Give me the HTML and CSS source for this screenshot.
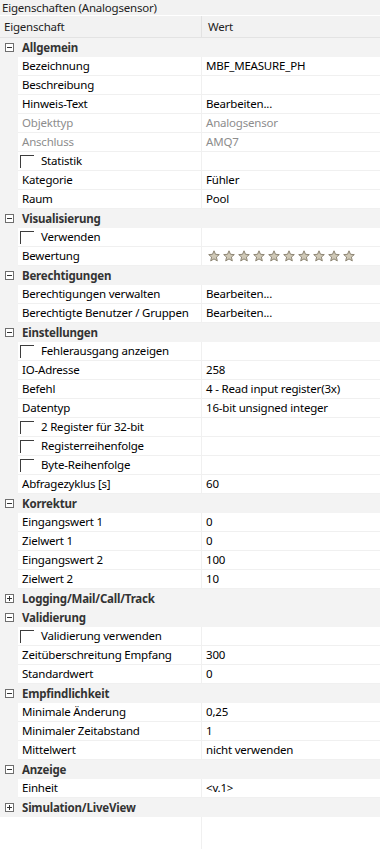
FILE: index.html
```html
<!DOCTYPE html>
<html lang="de">
<head>
<meta charset="utf-8">
<title>Eigenschaften</title>
<link rel="stylesheet" href="styles.css">
</head>
<body>
<div class="panel">
  <div class="title">Eigenschaften (Analogsensor)</div>
  <div class="header">
    <div class="h-name">Eigenschaft</div>
    <div class="h-value">Wert</div>
  </div>
  <div class="grid">
    <div class="cat"><span class="exp open"></span><span class="cat-label">Allgemein</span></div>
    <div class="row"><div class="gut"></div><div class="name">Bezeichnung</div><div class="value">MBF_MEASURE_PH</div></div>
    <div class="row"><div class="gut"></div><div class="name">Beschreibung</div><div class="value"></div></div>
    <div class="row"><div class="gut"></div><div class="name">Hinweis-Text</div><div class="value">Bearbeiten...</div></div>
    <div class="row dis"><div class="gut"></div><div class="name">Objekttyp</div><div class="value">Analogsensor</div></div>
    <div class="row dis"><div class="gut"></div><div class="name">Anschluss</div><div class="value">AMQ7</div></div>
    <div class="row"><div class="gut"></div><div class="name chk"><span class="box"></span>Statistik</div><div class="value"></div></div>
    <div class="row"><div class="gut"></div><div class="name">Kategorie</div><div class="value">Fühler</div></div>
    <div class="row"><div class="gut"></div><div class="name">Raum</div><div class="value">Pool</div></div>

    <div class="cat"><span class="exp open"></span><span class="cat-label">Visualisierung</span></div>
    <div class="row"><div class="gut"></div><div class="name chk"><span class="box"></span>Verwenden</div><div class="value"></div></div>
    <div class="row"><div class="gut"></div><div class="name">Bewertung</div><div class="value stars">
      <svg class="star" viewBox="0 0 12 12"><path d="M6 0.8 L7.5 4.3 L11.3 4.6 L8.4 7.1 L9.3 10.9 L6 8.9 L2.7 10.9 L3.6 7.1 L0.7 4.6 L4.5 4.3 Z"/></svg>
      <svg class="star" viewBox="0 0 12 12"><path d="M6 0.8 L7.5 4.3 L11.3 4.6 L8.4 7.1 L9.3 10.9 L6 8.9 L2.7 10.9 L3.6 7.1 L0.7 4.6 L4.5 4.3 Z"/></svg>
      <svg class="star" viewBox="0 0 12 12"><path d="M6 0.8 L7.5 4.3 L11.3 4.6 L8.4 7.1 L9.3 10.9 L6 8.9 L2.7 10.9 L3.6 7.1 L0.7 4.6 L4.5 4.3 Z"/></svg>
      <svg class="star" viewBox="0 0 12 12"><path d="M6 0.8 L7.5 4.3 L11.3 4.6 L8.4 7.1 L9.3 10.9 L6 8.9 L2.7 10.9 L3.6 7.1 L0.7 4.6 L4.5 4.3 Z"/></svg>
      <svg class="star" viewBox="0 0 12 12"><path d="M6 0.8 L7.5 4.3 L11.3 4.6 L8.4 7.1 L9.3 10.9 L6 8.9 L2.7 10.9 L3.6 7.1 L0.7 4.6 L4.5 4.3 Z"/></svg>
      <svg class="star" viewBox="0 0 12 12"><path d="M6 0.8 L7.5 4.3 L11.3 4.6 L8.4 7.1 L9.3 10.9 L6 8.9 L2.7 10.9 L3.6 7.1 L0.7 4.6 L4.5 4.3 Z"/></svg>
      <svg class="star" viewBox="0 0 12 12"><path d="M6 0.8 L7.5 4.3 L11.3 4.6 L8.4 7.1 L9.3 10.9 L6 8.9 L2.7 10.9 L3.6 7.1 L0.7 4.6 L4.5 4.3 Z"/></svg>
      <svg class="star" viewBox="0 0 12 12"><path d="M6 0.8 L7.5 4.3 L11.3 4.6 L8.4 7.1 L9.3 10.9 L6 8.9 L2.7 10.9 L3.6 7.1 L0.7 4.6 L4.5 4.3 Z"/></svg>
      <svg class="star" viewBox="0 0 12 12"><path d="M6 0.8 L7.5 4.3 L11.3 4.6 L8.4 7.1 L9.3 10.9 L6 8.9 L2.7 10.9 L3.6 7.1 L0.7 4.6 L4.5 4.3 Z"/></svg>
      <svg class="star" viewBox="0 0 12 12"><path d="M6 0.8 L7.5 4.3 L11.3 4.6 L8.4 7.1 L9.3 10.9 L6 8.9 L2.7 10.9 L3.6 7.1 L0.7 4.6 L4.5 4.3 Z"/></svg>
    </div></div>

    <div class="cat"><span class="exp open"></span><span class="cat-label">Berechtigungen</span></div>
    <div class="row"><div class="gut"></div><div class="name">Berechtigungen verwalten</div><div class="value">Bearbeiten...</div></div>
    <div class="row"><div class="gut"></div><div class="name">Berechtigte Benutzer / Gruppen</div><div class="value">Bearbeiten...</div></div>

    <div class="cat"><span class="exp open"></span><span class="cat-label">Einstellungen</span></div>
    <div class="row"><div class="gut"></div><div class="name chk"><span class="box"></span>Fehlerausgang anzeigen</div><div class="value"></div></div>
    <div class="row"><div class="gut"></div><div class="name">IO-Adresse</div><div class="value">258</div></div>
    <div class="row"><div class="gut"></div><div class="name">Befehl</div><div class="value">4 - Read input register(3x)</div></div>
    <div class="row"><div class="gut"></div><div class="name">Datentyp</div><div class="value">16-bit unsigned integer</div></div>
    <div class="row"><div class="gut"></div><div class="name chk"><span class="box"></span>2 Register für 32-bit</div><div class="value"></div></div>
    <div class="row"><div class="gut"></div><div class="name chk"><span class="box"></span>Registerreihenfolge</div><div class="value"></div></div>
    <div class="row"><div class="gut"></div><div class="name chk"><span class="box"></span>Byte-Reihenfolge</div><div class="value"></div></div>
    <div class="row"><div class="gut"></div><div class="name">Abfragezyklus [s]</div><div class="value">60</div></div>

    <div class="cat"><span class="exp open"></span><span class="cat-label">Korrektur</span></div>
    <div class="row"><div class="gut"></div><div class="name">Eingangswert 1</div><div class="value">0</div></div>
    <div class="row"><div class="gut"></div><div class="name">Zielwert 1</div><div class="value">0</div></div>
    <div class="row"><div class="gut"></div><div class="name">Eingangswert 2</div><div class="value">100</div></div>
    <div class="row"><div class="gut"></div><div class="name">Zielwert 2</div><div class="value">10</div></div>

    <div class="cat"><span class="exp closed"></span><span class="cat-label">Logging/Mail/Call/Track</span></div>

    <div class="cat"><span class="exp open"></span><span class="cat-label">Validierung</span></div>
    <div class="row"><div class="gut"></div><div class="name chk"><span class="box"></span>Validierung verwenden</div><div class="value"></div></div>
    <div class="row"><div class="gut"></div><div class="name">Zeitüberschreitung Empfang</div><div class="value">300</div></div>
    <div class="row"><div class="gut"></div><div class="name">Standardwert</div><div class="value">0</div></div>

    <div class="cat"><span class="exp open"></span><span class="cat-label">Empfindlichkeit</span></div>
    <div class="row"><div class="gut"></div><div class="name">Minimale Änderung</div><div class="value">0,25</div></div>
    <div class="row"><div class="gut"></div><div class="name">Minimaler Zeitabstand</div><div class="value">1</div></div>
    <div class="row"><div class="gut"></div><div class="name">Mittelwert</div><div class="value">nicht verwenden</div></div>

    <div class="cat"><span class="exp open"></span><span class="cat-label">Anzeige</span></div>
    <div class="row"><div class="gut"></div><div class="name">Einheit</div><div class="value">&lt;v.1&gt;</div></div>

    <div class="cat"><span class="exp closed"></span><span class="cat-label">Simulation/LiveView</span></div>
    <div class="filler"><div class="f-left"></div><div class="f-right"></div></div>
  </div>
</div>
</body>
</html>
```

FILE: styles.css
```css
* { box-sizing: border-box; }
html, body { margin: 0; padding: 0; background: #ffffff; }
body {
  font-family: "Noto Sans", "Open Sans", "DejaVu Sans", sans-serif;
  font-size: 11.5px;
  letter-spacing: -0.2px;
  color: #000000;
  width: 380px;
  height: 849px;
  overflow: hidden;
}
.panel { display: flex; flex-direction: column; height: 849px; }
.title {
  height: 16px;
  line-height: 15px;
  padding-left: 2px;
  background: #f2f2f2;
  color: #222;
  border-bottom: 1px solid #ffffff;
  white-space: nowrap;
}
.header {
  display: flex;
  height: 22px;
  background: #f2f2f2;
  border-bottom: 1px solid #e3e3e3;
}
.h-name { width: 201px; padding-left: 4px; line-height: 21px; color: #222; }
.h-value { flex: 1; padding-left: 6px; line-height: 21px; border-left: 1px solid #e2e2e2; color: #222; }
.grid { display: flex; flex-direction: column; flex: 1; }
.cat {
  display: flex;
  align-items: center;
  height: 19px;
  background: #f3f3f3;
}
.cat-label { font-weight: bold; color: #333; padding-left: 8px; white-space: nowrap; }
.exp {
  position: relative;
  width: 9px;
  height: 9px;
  margin-left: 5px;
  border: 1px solid #6e6e6e;
  background: #fff;
  flex: none;
}
.exp::before {
  content: "";
  position: absolute;
  left: 1px; top: 3px;
  width: 5px; height: 1px;
  background: #333;
}
.exp.closed::after {
  content: "";
  position: absolute;
  left: 3px; top: 1px;
  width: 1px; height: 5px;
  background: #333;
}
.row {
  display: flex;
  height: 19px;
}
.gut { width: 18px; background: #f3f3f3; flex: none; }
.name {
  width: 183px;
  flex: none;
  background: #fff;
  border-bottom: 1px solid #f0f0f0;
  padding-left: 4px;
  line-height: 18px;
  white-space: nowrap;
  overflow: hidden;
}
.value {
  flex: 1;
  background: #fff;
  border-bottom: 1px solid #f0f0f0;
  border-left: 1px solid #f0f0f0;
  padding-left: 4px;
  line-height: 18px;
  white-space: nowrap;
  overflow: hidden;
}
.dis .name, .dis .value { color: #8d8d8d; }
.chk { display: flex; align-items: center; padding-left: 2px; }
.box {
  width: 14px;
  height: 13px;
  border-top: 1px solid #3c3c3c;
  border-left: 1px solid #3c3c3c;
  margin-right: 7px;
  flex: none;
}
.stars { display: flex; align-items: center; gap: 3px; padding-left: 6px; }
.star { width: 12px; height: 12px; flex: none; }
.star path { fill: #cfc8b6; stroke: #8d8574; stroke-width: 1; stroke-linejoin: round; }
.filler { flex: 1; display: flex; }
.f-left { width: 201px; }
.f-right { flex: 1; border-left: 1px solid #f0f0f0; }
```
